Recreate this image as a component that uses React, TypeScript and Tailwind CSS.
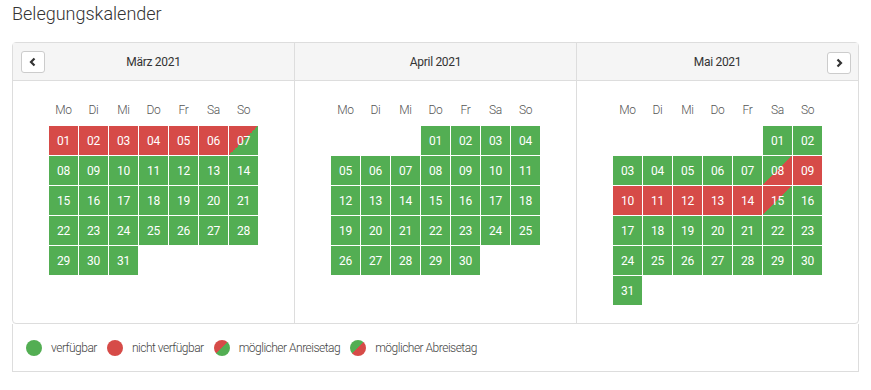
import React from "react";

type Status = "free" | "booked" | "arrive" | "depart";

interface Month {
  label: string;
  offset: number; // weekday index of the 1st (Mo = 0)
  days: number;
  status: (d: number) => Status;
}

const months: Month[] = [
  {
    label: "März 2021",
    offset: 0,
    days: 31,
    status: (d) => (d <= 6 ? "booked" : d === 7 ? "arrive" : "free"),
  },
  {
    label: "April 2021",
    offset: 3,
    days: 30,
    status: () => "free",
  },
  {
    label: "Mai 2021",
    offset: 5,
    days: 31,
    status: (d) => {
      if (d === 8) return "depart";
      if (d === 15) return "arrive";
      if (d > 8 && d < 15) return "booked";
      return "free";
    },
  },
];

const weekdays = ["Mo", "Di", "Mi", "Do", "Fr", "Sa", "So"];

const cellClass: Record<Status, string> = {
  free: "bg-[#53ae53]",
  booked: "bg-[#d64b48]",
  arrive: "bg-[linear-gradient(to_bottom_right,#d64b48_50%,#53ae53_50%)]",
  depart: "bg-[linear-gradient(to_bottom_right,#53ae53_50%,#d64b48_50%)]",
};

function Chevron({ dir }: { dir: "left" | "right" }) {
  return (
    <svg width="10" height="10" viewBox="0 0 10 10">
      <path
        d={dir === "left" ? "M6.5 1.5 L3 5 L6.5 8.5" : "M3.5 1.5 L7 5 L3.5 8.5"}
        fill="none"
        stroke="#333"
        strokeWidth="2.2"
      />
    </svg>
  );
}

function NavButton({ dir }: { dir: "left" | "right" }) {
  return (
    <button className="flex h-[22px] w-[24px] items-center justify-center rounded-[3px] border border-[#cccccc] bg-white">
      <Chevron dir={dir} />
    </button>
  );
}

function MonthView({ month, index }: { month: Month; index: number }) {
  const cells: (number | null)[] = [];
  for (let i = 0; i < month.offset; i++) cells.push(null);
  for (let d = 1; d <= month.days; d++) cells.push(d);

  return (
    <div className={`flex-1 ${index > 0 ? "border-l border-[#dddddd]" : ""}`}>
      <div className="relative flex h-[38px] items-center justify-center border-b border-[#dddddd] bg-[#f5f5f5] text-[12px] text-[#333]">
        {index === 0 && (
          <div className="absolute left-[8px] top-[8px]">
            <NavButton dir="left" />
          </div>
        )}
        {month.label}
        {index === 2 && (
          <div className="absolute right-[7px] top-[9px]">
            <NavButton dir="right" />
          </div>
        )}
      </div>
      <div className="flex flex-col items-center pt-[19px] pb-[18px]">
        <div className="mb-[6px] grid grid-cols-[repeat(7,29px)] gap-x-[1px]">
          {weekdays.map((w) => (
            <div key={w} className="flex h-[20px] items-center justify-center text-[12px] font-light text-[#555]">
              {w}
            </div>
          ))}
        </div>
        <div className="grid grid-cols-[repeat(7,29px)] auto-rows-[29px] gap-[1px]">
          {cells.map((d, i) =>
            d === null ? (
              <div key={`e${i}`} />
            ) : (
              <div
                key={d}
                className={`flex items-center justify-center text-[12px] text-white ${cellClass[month.status(d)]}`}
              >
                {String(d).padStart(2, "0")}
              </div>
            )
          )}
        </div>
      </div>
    </div>
  );
}

function LegendItem({ status, label }: { status: Status; label: string }) {
  return (
    <div className="flex items-center gap-[9px]">
      <span className={`block h-[16px] w-[16px] rounded-full ${cellClass[status]}`} />
      <span>{label}</span>
    </div>
  );
}

export default function App() {
  return (
    <div className="min-h-[390px] bg-white font-['Roboto',sans-serif] tracking-[-0.3px] text-[#333]">
      <h1 className="px-[12px] pt-[2px] text-[18px] font-light leading-[24px] tracking-normal text-[#333]">
        Belegungskalender
      </h1>
      <div className="mx-[12px] mt-[16px] w-[847px]">
        <div className="flex rounded-[4px] border border-[#dddddd]">
          {months.map((m, i) => (
            <MonthView key={m.label} month={m} index={i} />
          ))}
        </div>
        <div className="flex h-[48px] items-center gap-[10px] border-x border-b border-[#dddddd] px-[13px] text-[12px] font-light tracking-[-0.5px] text-[#444]">
          <LegendItem status="free" label="verfügbar" />
          <LegendItem status="booked" label="nicht verfügbar" />
          <LegendItem status="arrive" label="möglicher Anreisetag" />
          <LegendItem status="depart" label="möglicher Abreisetag" />
        </div>
      </div>
    </div>
  );
}
